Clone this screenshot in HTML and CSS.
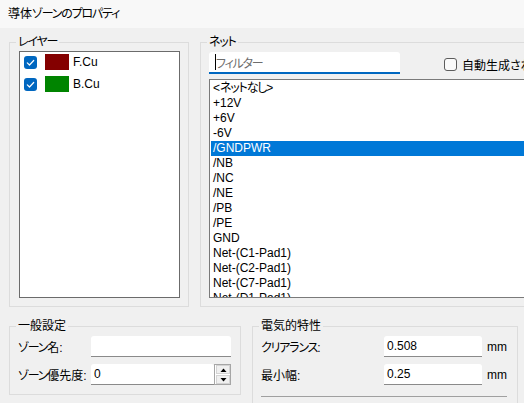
FILE: index.html
```html
<!DOCTYPE html>
<html lang="ja">
<head>
<meta charset="utf-8">
<title>導体ゾーンのプロパティ</title>
<link rel="stylesheet" href="styles.css">
</head>
<body>
<div class="window">
  <div class="titlebar">導体<span class="k">ゾーンのプロパティ</span></div>
  <div class="content">
    <div class="top-row">
      <fieldset class="group layers">
        <legend><span class="k">レイヤー</span></legend>
        <div class="layer-list">
          <div class="layer-row">
            <span class="cb"><svg width="13" height="13" viewBox="0 0 13 13"><rect x="0" y="0" width="13" height="13" rx="3" fill="#0067c0"/><path d="M3.3 6.9 L5.5 9 L9.7 4.5" fill="none" stroke="#fff" stroke-width="1.2" stroke-linecap="round" stroke-linejoin="round"/></svg></span>
            <span class="swatch fcu"></span>
            <span class="layer-name">F.Cu</span>
          </div>
          <div class="layer-row">
            <span class="cb"><svg width="13" height="13" viewBox="0 0 13 13"><rect x="0" y="0" width="13" height="13" rx="3" fill="#0067c0"/><path d="M3.3 6.9 L5.5 9 L9.7 4.5" fill="none" stroke="#fff" stroke-width="1.2" stroke-linecap="round" stroke-linejoin="round"/></svg></span>
            <span class="swatch bcu"></span>
            <span class="layer-name">B.Cu</span>
          </div>
        </div>
      </fieldset>
      <fieldset class="group nets">
        <legend><span class="k">ネット</span></legend>
        <div class="nets-inner">
          <div class="filter-row">
            <div class="filter"><span class="caret"></span><span class="placeholder k">フィルター</span></div>
            <div class="hide-auto"><span class="cb-empty"></span><span>自動生成されたネットを非表示</span></div>
          </div>
          <div class="net-list">
            <div class="net">&lt;<span class="k">ネットなし</span>&gt;</div>
            <div class="net">+12V</div>
            <div class="net">+6V</div>
            <div class="net">-6V</div>
            <div class="net selected">/GNDPWR</div>
            <div class="net">/NB</div>
            <div class="net">/NC</div>
            <div class="net">/NE</div>
            <div class="net">/PB</div>
            <div class="net">/PE</div>
            <div class="net">GND</div>
            <div class="net">Net-(C1-Pad1)</div>
            <div class="net">Net-(C2-Pad1)</div>
            <div class="net">Net-(C7-Pad1)</div>
            <div class="net">Net-(D1-Pad1)</div>
          </div>
        </div>
      </fieldset>
    </div>
    <div class="bottom-row">
      <fieldset class="group general">
        <legend>一般設定</legend>
        <div class="form general-form">
          <span class="label"><span class="k">ゾーン</span>名:</span>
          <div class="input"></div>
          <span class="label"><span class="k">ゾーン</span>優先度:</span>
          <div class="spin">
            <div class="input spin-text">0</div>
            <div class="spin-buttons">
              <div class="spin-btn"><svg width="7" height="4" viewBox="0 0 7 4"><path d="M0.5 4 L3.5 0.5 L6.5 4 Z" fill="#000"/></svg></div>
              <div class="spin-btn"><svg width="7" height="4" viewBox="0 0 7 4"><path d="M0.5 0 L3.5 3.5 L6.5 0 Z" fill="#000"/></svg></div>
            </div>
          </div>
        </div>
      </fieldset>
      <fieldset class="group electrical">
        <legend>電気的特性</legend>
        <div class="form elec-form">
          <span class="label"><span class="k">クリアランス</span>:</span>
          <div class="input">0.508</div>
          <span class="unit">mm</span>
          <span class="label">最小幅:</span>
          <div class="input">0.25</div>
          <span class="unit">mm</span>
          <div class="separator"></div>
        </div>
      </fieldset>
    </div>
  </div>
</div>
</body>
</html>
```
FILE: styles.css
```css
* {
  box-sizing: border-box;
}
html, body {
  margin: 0;
  padding: 0;
}
body {
  width: 524px;
  height: 403px;
  overflow: hidden;
  background: #f0f0f0;
  font-family: "Liberation Sans", "Noto Sans CJK JP", sans-serif;
  font-feature-settings: "palt";
  font-size: 12px;
  color: #000;
}
.k {
  letter-spacing: -1.2px;
}
.window {
  width: 524px;
  height: 403px;
  overflow: hidden;
}
.titlebar {
  height: 28px;
  line-height: 29px;
  padding-left: 8px;
  background: #f8f8f8;
}
.content {
  padding-left: 9px;
  overflow: hidden;
}
.group {
  margin: 0;
  border: 1px solid #dcdcdc;
  min-width: 0;
  flex: none;
}
.group legend {
  padding: 0 2px;
  line-height: 14px;
  height: 14px;
}
.top-row {
  display: flex;
  gap: 11px;
  margin-top: 7px;
  height: 272px;
  width: 560px;
}
.layers {
  width: 180px;
  height: 272px;
  padding: 2px 8px 8px 9px;
}
.layers legend {
  margin-left: -3px;
}
.layer-list {
  height: 100%;
  background: #fff;
  border: 1px solid #6b6b6b;
  display: flex;
  flex-direction: column;
  gap: 2px;
  padding-left: 4px;
}
.layer-row {
  height: 20px;
  display: flex;
  align-items: center;
}
.cb {
  width: 13px;
  height: 13px;
  display: flex;
}
.swatch {
  width: 24px;
  height: 16px;
  margin-left: 8px;
}
.fcu { background: #840000; }
.bcu { background: #008400; }
.layer-name {
  margin-left: 4px;
}
.nets {
  width: 340px;
  height: 272px;
  padding: 3px 0 8px 8px;
}
.nets legend {
  margin-left: -2px;
}
.nets-inner {
  height: 100%;
  display: flex;
  flex-direction: column;
}
.filter-row {
  height: 22px;
  display: flex;
  align-items: center;
  flex: none;
}
.filter {
  flex: none;
  width: 191px;
  height: 22px;
  background: #fff;
  border-bottom: 2px solid #0067c0;
  display: flex;
  align-items: center;
  padding-left: 6px;
  border-radius: 3px 3px 0 0;
}
.caret {
  width: 1px;
  height: 16px;
  background: #000;
}
.placeholder {
  color: #6d6d6d;
}
.hide-auto {
  flex: none;
  margin-left: 44px;
  display: flex;
  align-items: center;
  gap: 5px;
  white-space: nowrap;
  margin-top: 3px;
}
.cb-empty {
  width: 13px;
  height: 13px;
  border: 1px solid #5c5c5c;
  border-radius: 3px;
  background: #fafafa;
}
.net-list {
  flex: 1;
  margin-top: 5px;
  background: #fff;
  border: 1px solid #7a7a7a;
  border-right: none;
  padding: 1px 0 0 1px;
  overflow: hidden;
}
.net {
  height: 15px;
  line-height: 15px;
  padding-left: 2px;
  white-space: nowrap;
}
.net.selected {
  background: #0078d7;
  color: #fff;
}
.bottom-row {
  display: flex;
  gap: 11px;
  margin-top: 12px;
  width: 560px;
}
.general {
  width: 232px;
  height: 76px;
  padding: 3px 9px 8px 8px;
}
.general legend {
  margin-left: -2px;
}
.electrical {
  width: 266px;
  height: 130px;
  padding: 3px 10px 0 8px;
}
.electrical legend {
  margin-left: -2px;
}
.form {
  display: grid;
  row-gap: 7px;
  grid-auto-rows: 21px;
  align-items: center;
}
.general-form {
  grid-template-columns: 73px 140px;
}
.elec-form {
  grid-template-columns: 123px 98px 1fr;
}
.label {
  white-space: nowrap;
}
.input {
  height: 21px;
  background: #fff;
  border-bottom: 1px solid #8a8a8a;
  padding-left: 3px;
  line-height: 21px;
  border-radius: 3px 3px 0 0;
}
.spin {
  display: flex;
  height: 21px;
}
.spin-text {
  flex: 1;
}
.spin-buttons {
  flex: none;
  width: 17px;
  height: 21px;
  border: 1px solid #a6a6a6;
  background: #fff;
  display: flex;
  flex-direction: column;
  gap: 1px;
  padding: 0 0 0 1px;
}
.spin-btn {
  flex: 1;
  background: #f0f0f0;
  border: 1px solid #d4d4d4;
  display: flex;
  align-items: center;
  justify-content: center;
}
.unit {
  padding-left: 5px;
}
.separator {
  grid-column: 1 / span 3;
  height: 1px;
  background: #a0a0a0;
  align-self: start;
  margin-top: 4px;
}
```
